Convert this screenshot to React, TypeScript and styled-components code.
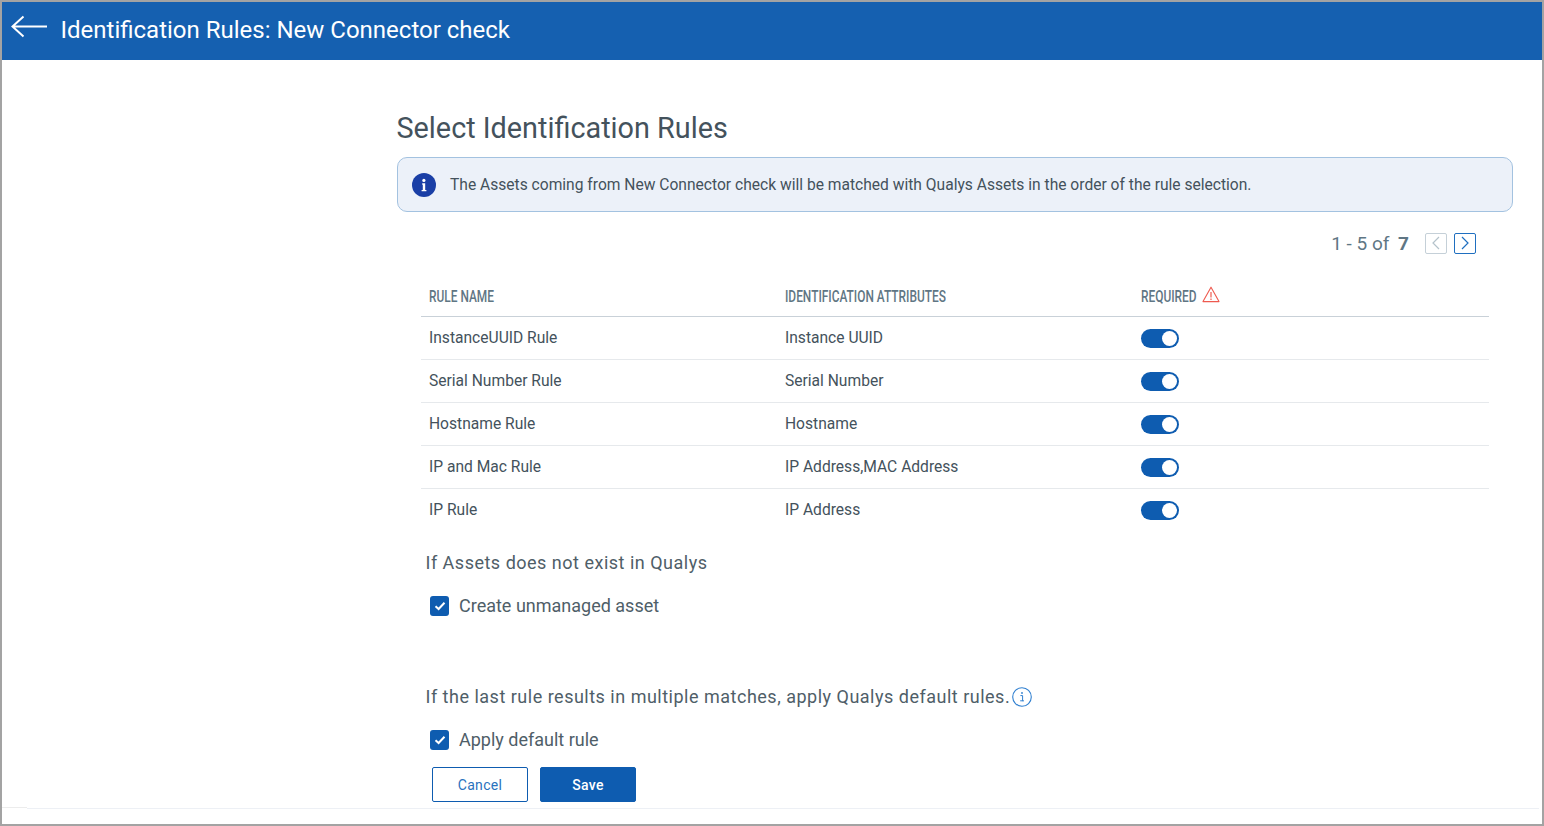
import React from "react";
import styled, { createGlobalStyle } from "styled-components";

const GlobalStyle = createGlobalStyle`
	html, body {
		margin: 0;
		padding: 0;
		background: #fff;
		font-family: Roboto, "Liberation Sans", sans-serif;
	}
`;

const rules = [
	{ name: "InstanceUUID Rule", attrs: "Instance UUID" },
	{ name: "Serial Number Rule", attrs: "Serial Number" },
	{ name: "Hostname Rule", attrs: "Hostname" },
	{ name: "IP and Mac Rule", attrs: "IP Address,MAC Address" },
	{ name: "IP Rule", attrs: "IP Address" },
];

function App() {
	return (
		<Frame>
			<GlobalStyle />
			<Header>
				<BackIcon width="38" height="24" viewBox="0 0 38 24">
					<path
						d="M36 11.5H2M12.5 1.5 1.5 11.5l11 10"
						fill="none"
						stroke="#fff"
						strokeWidth="2"
					/>
				</BackIcon>
				<Title>Identification Rules: New Connector check</Title>
			</Header>
			<Content>
				<Heading>Select Identification Rules</Heading>
				<Banner>
					<svg width="24" height="24" viewBox="0 0 24 24">
						<circle cx="12" cy="12" r="12" fill="#1a3fa6" />
						<path
							d="M10.2 10.3h3v6.6h1.2v1.4H9.6v-1.4h1.2v-5.2h-.6z"
							fill="#fff"
						/>
						<circle cx="11.9" cy="7.4" r="1.6" fill="#fff" />
					</svg>
					<span>
						The Assets coming from New Connector check will be matched with
						Qualys Assets in the order of the rule selection.
					</span>
				</Banner>
				<Pager>
					<PagerText>
						1 - 5 of <b>7</b>
					</PagerText>
					<PagerButton $active={false}>
						<svg width="10" height="14" viewBox="0 0 10 14">
							<path d="M8 1 2 7l6 6" fill="none" stroke="currentColor" strokeWidth="1.2" />
						</svg>
					</PagerButton>
					<PagerButton $active={true}>
						<svg width="10" height="14" viewBox="0 0 10 14">
							<path d="m2 1 6 6-6 6" fill="none" stroke="currentColor" strokeWidth="1.2" />
						</svg>
					</PagerButton>
				</Pager>
				<Table>
					<HeadRow>
						<HeadCell>
							<Condensed>RULE NAME</Condensed>
						</HeadCell>
						<HeadCell>
							<Condensed>IDENTIFICATION ATTRIBUTES</Condensed>
						</HeadCell>
						<HeadCell>
							<Condensed>REQUIRED</Condensed>
							<WarnIcon width="18" height="17" viewBox="0 0 18 17">
								<path
									d="M9 1.2 17 15.6H1z"
									fill="none"
									stroke="#ee5a4f"
									strokeWidth="1.1"
									strokeLinejoin="round"
								/>
								<path d="M9 6v5.4M9 12.6v1.4" stroke="#ee5a4f" strokeWidth="1.2" />
							</WarnIcon>
						</HeadCell>
					</HeadRow>
					{rules.map((rule) => (
						<Row key={rule.name}>
							<Cell>{rule.name}</Cell>
							<Cell>{rule.attrs}</Cell>
							<Cell>
								<Toggle />
							</Cell>
						</Row>
					))}
				</Table>
				<Options>
					<Question>If Assets does not exist in Qualys</Question>
					<CheckRow>
						<CheckBox />
						Create unmanaged asset
					</CheckRow>
					<SecondQuestion>
						If the last rule results in multiple matches, apply Qualys default rules.
						<svg width="20" height="20" viewBox="0 0 20 20">
							<circle cx="10" cy="10" r="9.3" fill="none" stroke="#2f7fd0" strokeWidth="1.1" />
							<path
								d="M8.4 8.6h2.2v5.2h1M8.2 13.8h3.4"
								fill="none"
								stroke="#2f7fd0"
								strokeWidth="1"
							/>
							<circle cx="10" cy="6" r="0.9" fill="#2f7fd0" />
						</svg>
					</SecondQuestion>
					<CheckRow>
						<CheckBox />
						Apply default rule
					</CheckRow>
				</Options>
				<Buttons>
					<CancelButton>Cancel</CancelButton>
					<SaveButton>Save</SaveButton>
				</Buttons>
			</Content>
			<Footer>
				<FooterStub />
				<FooterLine />
			</Footer>
		</Frame>
	);
}

function CheckBox() {
	return (
		<CheckBoxStyled>
			<svg width="12" height="10" viewBox="0 0 12 10">
				<path d="M1.5 5.2 4.6 8 10.5 1.8" fill="none" stroke="#fff" strokeWidth="2" />
			</svg>
		</CheckBoxStyled>
	);
}

const Frame = styled.div`
	box-sizing: border-box;
	width: 1544px;
	height: 826px;
	border: 2px solid #a3a3a3;
	display: flex;
	flex-direction: column;
	overflow: hidden;
	background: #fff;
`;

const Header = styled.header`
	flex: 0 0 58px;
	background: #1560b0;
	display: flex;
	align-items: center;
	padding-left: 9px;
`;

const BackIcon = styled.svg`
	flex-shrink: 0;
	margin: -9px 11.5px 0 0;
`;

const Title = styled.h1`
	margin: 0 0 2px;
	color: #fff;
	font-size: 24px;
	font-weight: 400;
`;

const Content = styled.main`
	flex: 1;
	padding: 50px 29px 0 395px;
	display: flex;
	flex-direction: column;
`;

const Heading = styled.h2`
	margin: 0 0 11px -0.5px;
	font-size: 28.8px;
	line-height: 36px;
	font-weight: 400;
	color: #44525c;
`;

const Banner = styled.div`
	box-sizing: border-box;
	height: 55px;
	display: flex;
	align-items: center;
	gap: 14px;
	padding-left: 14px;
	background: #ecf1f9;
	border: 1px solid #a3c2e0;
	border-radius: 10px;
	font-size: 15.6px;
	color: #44525c;
`;

const Pager = styled.div`
	display: flex;
	align-items: center;
	justify-content: flex-end;
	height: 22px;
	margin: 20px 37px 0 0;
	gap: 7px;
`;

const PagerText = styled.span`
	margin-right: 9px;
	font-size: 19px;
	color: #5f7684;

	b {
		margin-left: 4px;
		font-weight: 700;
	}
`;

const PagerButton = styled.span<{ $active: boolean }>`
	box-sizing: border-box;
	width: 22px;
	height: 21px;
	display: flex;
	align-items: center;
	justify-content: center;
	border-radius: 2px;
	border: 1px solid ${({ $active }) => ($active ? "#1f6fc0" : "#c5d0d8")};
	color: ${({ $active }) => ($active ? "#1f6fc0" : "#b4c2cb")};
`;

const Table = styled.div`
	margin: 23px 24px 0;
	display: flex;
	flex-direction: column;
`;

const columns = `
	display: grid;
	grid-template-columns: 356px 356px 1fr;
	align-items: center;
	padding-left: 8px;
`;

const HeadRow = styled.div`
	${columns}
	height: 40px;
	box-sizing: border-box;
	padding-bottom: 1px;
	border-bottom: 1px solid #c9d1d8;
`;

const HeadCell = styled.div`
	display: flex;
	align-items: center;
	height: 100%;
`;

const Condensed = styled.span`
	display: inline-block;
	font-size: 17px;
	font-weight: 500;
	color: #5f7684;
	transform: scaleX(0.7);
	transform-origin: left center;
	white-space: nowrap;
	width: 58px;
`;

const WarnIcon = styled.svg`
	margin: -3px 0 0 3px;
`;

const Row = styled.div`
	${columns}
	height: 43px;
	box-sizing: border-box;
	border-bottom: 1px solid #e6e9ec;

	&:last-child {
		border-bottom-color: transparent;
	}
`;

const Cell = styled.div`
	font-size: 15.6px;
	color: #44525c;
`;

const Toggle = styled.span`
	position: relative;
	display: block;
	width: 38px;
	height: 19px;
	border-radius: 10px;
	background: #0e5cb0;

	&::after {
		content: "";
		position: absolute;
		top: 2px;
		right: 2px;
		width: 15px;
		height: 15px;
		border-radius: 50%;
		background: #fff;
	}
`;

const Options = styled.div`
	margin: 19px 0 0 29px;
	display: flex;
	flex-direction: column;
`;

const Question = styled.div`
	margin-left: -0.5px;
	font-size: 18px;
	line-height: 24px;
	color: #4f5e68;
	letter-spacing: 0.5px;
`;

const SecondQuestion = styled(Question)`
	display: flex;
	align-items: center;
	gap: 2px;
	margin-top: 67px;
`;

const CheckRow = styled.label`
	display: flex;
	align-items: center;
	gap: 10px;
	margin: 19px 0 0 4px;
	font-size: 18px;
	line-height: 24px;
	color: #4f5e68;
`;

const CheckBoxStyled = styled.span`
	width: 19px;
	height: 20px;
	display: flex;
	align-items: center;
	justify-content: center;
	border-radius: 3px;
	background: #0e5cb0;
`;

const Buttons = styled.div`
	display: flex;
	gap: 12px;
	margin: 15px 0 0 35px;
`;

const BaseButton = styled.button`
	box-sizing: border-box;
	width: 96px;
	height: 35px;
	border-radius: 2px;
	font-family: Roboto, "Liberation Sans", sans-serif;
	font-size: 14px;
	letter-spacing: 0.3px;
`;

const CancelButton = styled(BaseButton)`
	background: #fff;
	border: 1px solid #0e5cb0;
	color: #2a72bd;
`;

const SaveButton = styled(BaseButton)`
	background: #0e5cb0;
	border: 1px solid #0e5cb0;
	color: #fff;
	font-weight: 500;
`;

const Footer = styled.footer`
	display: flex;
	align-items: flex-start;
	height: 17px;
	margin-top: -14px;
`;

const FooterStub = styled.div`
	width: 25px;
	height: 1px;
	background: #ececec;
`;

const FooterLine = styled.div`
	flex: 1;
	height: 1px;
	margin: 1px 3px 0 0;
	background: #edf0f5;
`;

export default App;
